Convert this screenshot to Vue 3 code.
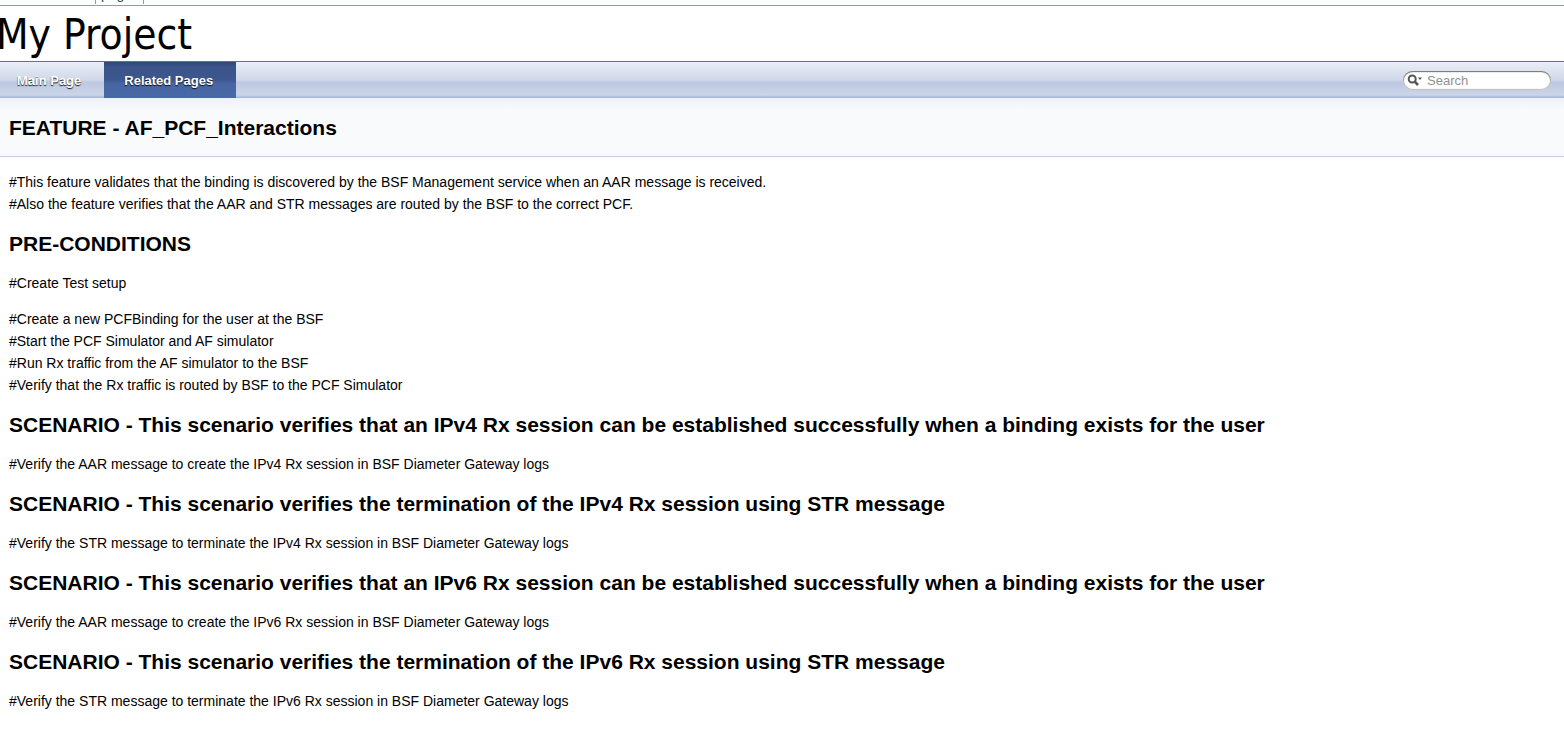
<script setup>
import { ref } from 'vue'

const query = ref('')

const sections = [
  {
    title: 'PRE-CONDITIONS',
    paragraphs: [
      ['#Create Test setup'],
      [
        '#Create a new PCFBinding for the user at the BSF',
        '#Start the PCF Simulator and AF simulator',
        '#Run Rx traffic from the AF simulator to the BSF',
        '#Verify that the Rx traffic is routed by BSF to the PCF Simulator',
      ],
    ],
  },
  {
    title: 'SCENARIO - This scenario verifies that an IPv4 Rx session can be established successfully when a binding exists for the user',
    paragraphs: [['#Verify the AAR message to create the IPv4 Rx session in BSF Diameter Gateway logs']],
  },
  {
    title: 'SCENARIO - This scenario verifies the termination of the IPv4 Rx session using STR message',
    paragraphs: [['#Verify the STR message to terminate the IPv4 Rx session in BSF Diameter Gateway logs']],
  },
  {
    title: 'SCENARIO - This scenario verifies that an IPv6 Rx session can be established successfully when a binding exists for the user',
    paragraphs: [['#Verify the AAR message to create the IPv6 Rx session in BSF Diameter Gateway logs']],
  },
  {
    title: 'SCENARIO - This scenario verifies the termination of the IPv6 Rx session using STR message',
    paragraphs: [['#Verify the STR message to terminate the IPv6 Rx session in BSF Diameter Gateway logs']],
  },
]
</script>

<template>
  <div class="page">
    <div class="strip"><span class="strip-cell">page</span></div>
    <header class="project">My Project</header>
    <nav class="nav">
      <div class="tabs">
        <a class="tab" href="#main">Main Page</a>
        <a class="tab active" href="#pages" aria-current="page">Related Pages</a>
      </div>
      <label class="search">
        <svg class="mag" width="17" height="13" viewBox="0 0 17 13" aria-hidden="true">
          <circle cx="5.2" cy="5" r="3.5" fill="none" stroke="#555" stroke-width="2" />
          <path d="M7.8 7.6 11 11" stroke="#555" stroke-width="2.6" />
          <path d="M11 3.5h4L13 6z" fill="#555" />
        </svg>
        <input v-model="query" type="text" placeholder="Search" aria-label="Search" />
      </label>
    </nav>
    <div class="header">
      <h1>FEATURE - AF_PCF_Interactions</h1>
    </div>
    <main class="contents">
      <p>
        #This feature validates that the binding is discovered by the BSF Management service when an AAR message is received.<br />
        #Also the feature verifies that the AAR and STR messages are routed by the BSF to the correct PCF.
      </p>
      <section v-for="s in sections" :key="s.title">
        <h2>{{ s.title }}</h2>
        <p v-for="(lines, i) in s.paragraphs" :key="i">
          <template v-for="(line, j) in lines" :key="j"><br v-if="j" />{{ line }}</template>
        </p>
      </section>
    </main>
  </div>
</template>

<style>
body {
  margin: 0;
  background: #fff;
}
</style>

<style scoped>
.page {
  overflow: hidden;
  color: #000;
  font: 14px/22px "Liberation Sans", Arial, sans-serif;
}
.strip {
  display: flex;
  height: 5px;
  overflow: hidden;
  border-bottom: 1px solid #62c462;
}
.strip-cell {
  box-sizing: border-box;
  width: 49px;
  height: 20px;
  margin-top: -16px;
  margin-left: 95px;
  padding-left: 5px;
  border: solid #62c462;
  border-width: 0 1px;
  color: #444;
  font-size: 14px;
  line-height: 20px;
}
.project {
  height: 55px;
  margin-left: -4px;
  font: 42px/58px "DejaVu Sans Condensed", Tahoma, "Noto Sans", sans-serif;
}
.nav {
  display: flex;
  align-items: center;
  justify-content: space-between;
  height: 36px;
  padding-right: 13px;
  border-top: 1px solid #5373b4;
  background: linear-gradient(#eaeef6 0, #cfd7e9 50%, #bdc8e1 56%, #ccd5e8 92%, #aab9d6 98%);
}
.tabs {
  display: flex;
  margin-left: -3px;
}
.tab {
  padding: 2px 23px 0 20px;
  color: #fff;
  font-size: 13px;
  font-weight: bold;
  line-height: 34px;
  text-decoration: none;
  text-shadow: 0 1px 1px rgba(0, 0, 0, 0.9);
}
.active {
  background: linear-gradient(#2f4777 0, #3a5388 12%, #3d588f 50%, #4665a2 60%, #4a69a8 100%);
}
.search {
  display: flex;
  align-items: center;
  box-sizing: border-box;
  width: 148px;
  height: 19px;
  padding-left: 4px;
  border-radius: 10px;
  background: #fff;
  box-shadow: inset 0 1px 1px #777, inset 0 0 1px 1px #bbb;
}
.mag {
  flex: none;
}
.search input {
  width: 115px;
  height: 19px;
  margin-left: 3px;
  padding: 0;
  border: 0;
  outline: 0;
  background: transparent;
  color: #909090;
  font: 13px "Liberation Sans", Arial, sans-serif;
}
.search input::placeholder {
  color: #909090;
  opacity: 1;
}
.header {
  padding: 18px 9px 17px;
  border-bottom: 1px solid #c4cfe5;
  background: linear-gradient(#eef1f7, #f9fafc 12px);
}
.contents {
  padding: 14px 9px;
}
h1,
h2 {
  margin: 17px 0;
  font-size: 21px;
  font-weight: bold;
  line-height: 23px;
}
h1 {
  margin: 0;
}
p {
  margin: 0;
}
p + p {
  margin-top: 14px;
}
</style>
